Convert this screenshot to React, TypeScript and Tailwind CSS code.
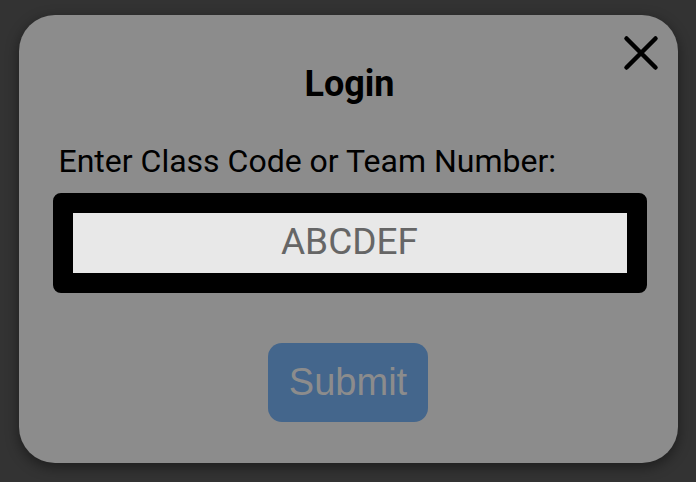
import React from "react";

const CloseIcon = () => (
  <svg width="36" height="36" viewBox="0 0 36 36" fill="none">
    <path d="M3.5 3.5L32.5 32.5M32.5 3.5L3.5 32.5" stroke="#000" strokeWidth="4.5" strokeLinecap="round" />
  </svg>
);

const App = () => {
  return (
    <div className="w-[696px] h-[482px] bg-[#333333] flex justify-center pt-[15px] font-['Roboto',sans-serif]">
      <div className="relative w-[659px] h-[448px] rounded-[36px] bg-[#8c8c8c] shadow-[0_4px_14px_rgba(0,0,0,0.45)] pt-[48px] pl-[34px] pr-[31px] flex flex-col">
        <button className="absolute top-[20px] right-[19px]">
          <CloseIcon />
        </button>

        <h2 className="text-[36px] leading-[42px] font-bold text-black text-center">Login</h2>

        <label className="mt-[38px] ml-[6px] text-[32px] leading-[37px] text-black">
          Enter Class Code or Team Number:
        </label>

        <input
          readOnly
          placeholder="ABCDEF"
          className="mt-[13px] w-full h-[100px] border-[20px] border-black rounded-[8px] bg-[#e8e8e8] text-center text-[37px] leading-[44px] pb-[4px] text-[#666] placeholder:text-[#666] outline-none"
        />

        <button className="mt-[50px] self-center mr-[3px] w-[160px] h-[79px] rounded-[14px] bg-[#44668c] text-[38px] text-[#8c8c8c] font-['Liberation_Sans',Arial,sans-serif]">
          Submit
        </button>
      </div>
    </div>
  );
};

export default App;
